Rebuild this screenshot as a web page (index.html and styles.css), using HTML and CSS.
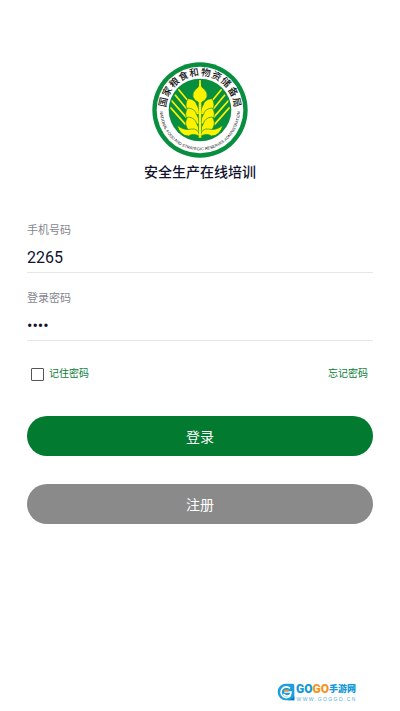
FILE: index.html
```html
<!DOCTYPE html>
<html lang="zh-CN">
<head>
<meta charset="utf-8">
<meta name="viewport" content="width=device-width, initial-scale=1">
<title>安全生产在线培训</title>
<link rel="stylesheet" href="styles.css">
</head>
<body>
<main class="page">
  <header class="brand">
    <svg class="emblem" viewBox="21 20 288 288" aria-hidden="true">
      <defs>
        <path id="lower-arc" d="M47 143A120 120 0 1 0 283 143"/>
        <clipPath id="disc"><circle cx="165" cy="164" r="90"/></clipPath>
      </defs>
      <circle cx="165" cy="164" r="143" fill="#078f3f"/>
      <circle cx="165" cy="164" r="130" fill="#fff"/>
      <circle cx="165" cy="164" r="94" fill="#078f3f"/>
      <g class="ring-cn">
        <text x="165" y="61" transform="rotate(-78 165 164)">国</text>
        <text x="165" y="61" transform="rotate(-61 165 164)">家</text>
        <text x="165" y="61" transform="rotate(-43 165 164)">粮</text>
        <text x="165" y="61" transform="rotate(-26 165 164)">食</text>
        <text x="165" y="61" transform="rotate(-9 165 164)">和</text>
        <text x="165" y="61" transform="rotate(9 165 164)">物</text>
        <text x="165" y="61" transform="rotate(26 165 164)">资</text>
        <text x="165" y="61" transform="rotate(43 165 164)">储</text>
        <text x="165" y="61" transform="rotate(61 165 164)">备</text>
        <text x="165" y="61" transform="rotate(78 165 164)">局</text>
      </g>
      <text class="ring-en"><textPath href="#lower-arc" startOffset="50%">NATIONAL FOOD AND STRATEGIC RESERVES ADMINISTRATION</textPath></text>
      <g clip-path="url(#disc)" stroke="#fff200" stroke-width="5" fill="none">
        <path d="M165 100V74M130 138L100 102M126 162L90 118M124 186L78 134M122 208L76 156M200 138L230 102M204 162L240 118M206 186L252 134M208 208L254 156"/>
      </g>
      <g fill="#fff200" stroke="#078f3f" stroke-width="2">
        <path d="M165 84Q168 96 177 101Q189 112 186 125Q182 136 170 141V248H160V141Q148 136 144 125Q141 112 153 101Q162 96 165 84Z"/>
        <g id="grains">
          <path id="grain" d="M129 130Q151 131 156 150Q163 158 163 178Q136 180 127 163Q118 147 129 130Z"/>
          <use href="#grain" transform="translate(-1 28)"/>
          <use href="#grain" transform="translate(-1 55)"/>
          <path d="M96 210Q119 227 139 221Q161 218 164 243Q145 232 130 242Q106 242 96 210Z"/>
        </g>
        <use href="#grains" transform="translate(330 0) scale(-1 1)"/>
      </g>
      <path d="M165 84V246" stroke="#fff200" stroke-width="6"/>
    </svg>
    <h1 class="title">安全生产在线培训</h1>
  </header>

  <form class="form">
    <div class="field">
      <label for="phone">手机号码</label>
      <input id="phone" type="tel" value="2265">
    </div>
    <div class="field">
      <label for="password">登录密码</label>
      <input id="password" type="password" value="2265">
    </div>
    <div class="options">
      <label class="remember"><input type="checkbox">记住密码</label>
      <a href="#">忘记密码</a>
    </div>
    <div class="actions">
      <button class="primary" type="submit">登录</button>
      <button type="button">注册</button>
    </div>
  </form>

  <footer class="mark">
    <svg class="mark-icon" viewBox="0 0 54 54" aria-hidden="true">
      <path d="M27 2H46Q52 2 52 8V52H27A25 25 0 0 1 27 2Z" fill="#1e9fdc"/>
      <path d="M39 16A16 16 0 1 0 41 37" fill="none" stroke="#fff" stroke-width="5"/>
      <path d="M22 27H42Q42 39 31 39Q23 39 19 33" fill="none" stroke="#fff" stroke-width="5"/>
      <path d="M22 20H35V26H22Z" fill="#f7941d"/>
      <path d="M31 52Q46 50 52 40V52Z" fill="#0878bd"/>
    </svg>
    <div class="mark-text">
      <span class="mark-name"><b>GO</b><b class="orange">GO</b><span class="mark-cn">手游网</span></span>
      <span class="mark-url">W W W . G O G G O . C N</span>
    </div>
  </footer>
</main>
</body>
</html>
```
FILE: styles.css
```css
* { box-sizing: border-box; }

body {
  margin: 0;
  background: #fff;
  color: #12122e;
  font-family: Roboto, "Noto Sans CJK SC", sans-serif;
}

.page {
  display: flex;
  flex-direction: column;
  min-height: 100vh;
  padding: 62px 27px 9px;
}

.brand {
  display: flex;
  flex-direction: column;
  align-items: center;
}

.emblem { width: 96px; height: 96px; }

.ring-cn {
  font: 500 29px "Noto Sans CJK SC", sans-serif;
  text-anchor: middle;
  fill: #111;
}

.ring-en {
  font: 12px "Liberation Sans", sans-serif;
  text-anchor: middle;
  fill: #111;
}

.title {
  margin: 4px 0 0;
  font-size: 14px;
  line-height: 20px;
  font-weight: 500;
}

.form { margin-top: 41px; }

.field {
  display: flex;
  flex-direction: column;
  height: 68px;
}

.field label {
  color: #85858f;
  font-size: 11px;
  line-height: 16px;
}

.field input {
  width: 100%;
  height: 34px;
  padding: 4px 0 0;
  border: 0;
  border-bottom: 1px solid #e6e6e8;
  outline: 0;
  background: transparent;
  color: #12122e;
  font: 16px Roboto, sans-serif;
}

.options {
  display: flex;
  justify-content: space-between;
  align-items: center;
  padding: 0 5px 0 4px;
  margin-top: 7px;
  color: #087c35;
  font-size: 10px;
  line-height: 16px;
}

.options a { color: inherit; text-decoration: none; }

.remember { display: flex; align-items: center; gap: 5px; }

.remember input {
  appearance: none;
  width: 13px;
  height: 13px;
  margin: 0;
  border: 1px solid #555;
  border-radius: 1px;
}

.remember input:checked { background: #027b30; }

.actions {
  display: flex;
  flex-direction: column;
  gap: 28px;
  margin-top: 34px;
}

button {
  width: 100%;
  height: 40px;
  padding: 0;
  border: 0;
  border-radius: 20px;
  background: #8a8a8a;
  color: #fff;
  font: 14px "Noto Sans CJK SC", sans-serif;
}

.primary { background: #027b30; }

.mark {
  display: flex;
  align-items: center;
  align-self: flex-end;
  gap: 1px;
  margin-top: auto;
  margin-right: 17px;
}

.mark-icon { width: 18px; height: 18px; }

.mark-text { display: flex; flex-direction: column; }

.mark-name {
  display: flex;
  align-items: center;
  color: #1598d5;
  font: 900 12px/14px "Liberation Sans Narrow", Roboto, sans-serif;
}

.mark-name b { font-weight: 900; }

.orange { color: #f7941d; }

.mark-cn { font: 900 9px/14px "Noto Sans CJK SC", sans-serif; }

.mark-url {
  color: #58afd8;
  font: 5px/6px "Liberation Sans", sans-serif;
  text-align: center;
}
```
